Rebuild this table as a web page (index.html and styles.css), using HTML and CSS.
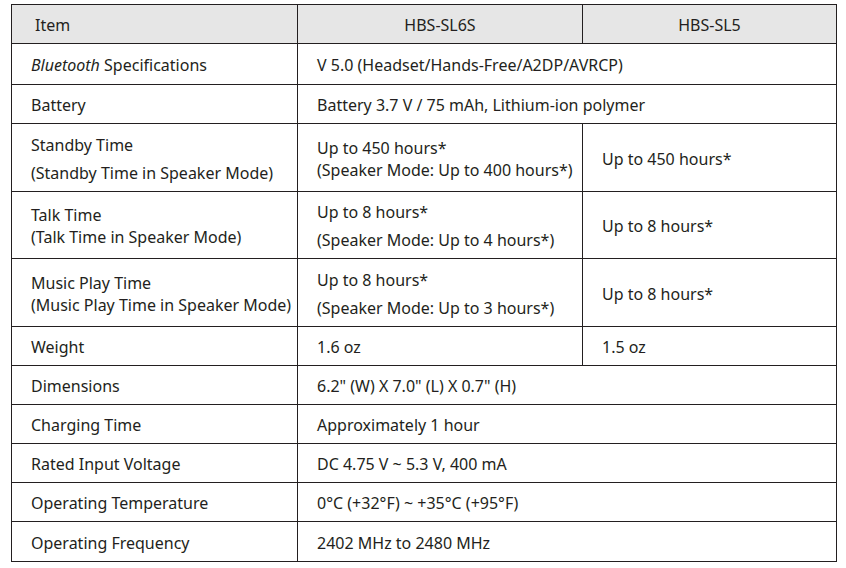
FILE: index.html
```html
<!DOCTYPE html>
<html lang="en">
<head>
<meta charset="utf-8">
<title>Specifications</title>
<link rel="stylesheet" href="styles.css">
</head>
<body>
<div class="page">
<table class="spec">
  <colgroup>
    <col class="c-item">
    <col class="c-a">
    <col class="c-b">
  </colgroup>
  <thead>
    <tr class="h39">
      <th class="th-item">Item</th>
      <th class="th-model">HBS-SL6S</th>
      <th class="th-model">HBS-SL5</th>
    </tr>
  </thead>
  <tbody>
    <tr class="h41">
      <td><i>Bluetooth</i> Specifications</td>
      <td colspan="2">V 5.0 (Headset/Hands-Free/A2DP/AVRCP)</td>
    </tr>
    <tr class="h39">
      <td>Battery</td>
      <td colspan="2">Battery 3.7 V / 75 mAh, Lithium-ion polymer</td>
    </tr>
    <tr class="h68">
      <td class="loose"><span class="ln">Standby Time</span><span class="ln">(Standby Time in Speaker Mode)</span></td>
      <td class="tight"><span class="ln">Up to 450 hours*</span><span class="ln">(Speaker Mode: Up to 400 hours*)</span></td>
      <td>Up to 450 hours*</td>
    </tr>
    <tr class="h67">
      <td class="tight"><span class="ln">Talk Time</span><span class="ln">(Talk Time in Speaker Mode)</span></td>
      <td class="loose"><span class="ln">Up to 8 hours*</span><span class="ln">(Speaker Mode: Up to 4 hours*)</span></td>
      <td>Up to 8 hours*</td>
    </tr>
    <tr class="h68">
      <td class="tight"><span class="ln">Music Play Time</span><span class="ln">(Music Play Time in Speaker Mode)</span></td>
      <td class="loose"><span class="ln">Up to 8 hours*</span><span class="ln">(Speaker Mode: Up to 3 hours*)</span></td>
      <td>Up to 8 hours*</td>
    </tr>
    <tr class="h39">
      <td>Weight</td>
      <td>1.6 oz</td>
      <td>1.5 oz</td>
    </tr>
    <tr class="h39">
      <td>Dimensions</td>
      <td colspan="2">6.2" (W) X 7.0" (L) X 0.7" (H)</td>
    </tr>
    <tr class="h39">
      <td>Charging Time</td>
      <td colspan="2">Approximately 1 hour</td>
    </tr>
    <tr class="h39">
      <td>Rated Input Voltage</td>
      <td colspan="2">DC 4.75 V ~ 5.3 V, 400 mA</td>
    </tr>
    <tr class="h39">
      <td>Operating Temperature</td>
      <td colspan="2">0°C (+32°F) ~ +35°C (+95°F)</td>
    </tr>
    <tr class="h40">
      <td>Operating Frequency</td>
      <td colspan="2">2402 MHz to 2480 MHz</td>
    </tr>
  </tbody>
</table>
</div>
</body>
</html>
```

FILE: styles.css
```css
html, body {
  margin: 0;
  padding: 0;
  background: #ffffff;
}

.page {
  padding: 4px 0 0 11px;
}

.spec {
  border-collapse: collapse;
  table-layout: fixed;
  width: 825px;
  font-family: "Noto Sans", "Open Sans", sans-serif;
  font-size: 16px;
  color: #231f20;
}

.c-item { width: 286px; }
.c-a { width: 285px; }
.c-b { width: 254px; }

.spec th,
.spec td {
  border: 1px solid #231f20;
  padding: 2px 0 0 19px;
  text-align: left;
  vertical-align: middle;
  font-weight: normal;
  line-height: 20px;
  white-space: nowrap;
}

.spec thead th {
  background: #e6e6e6;
}

.spec .th-item {
  padding-left: 23px;
}

.spec .th-model {
  text-align: center;
  padding-left: 0;
}

.ln {
  display: block;
}

.spec td.tight { line-height: 22px; }
.spec td.loose { line-height: 28px; }

.h39 { height: 39px; }
.h40 { height: 40px; }
.h41 { height: 41px; }
.h67 { height: 67px; }
.h68 { height: 68px; }
```
